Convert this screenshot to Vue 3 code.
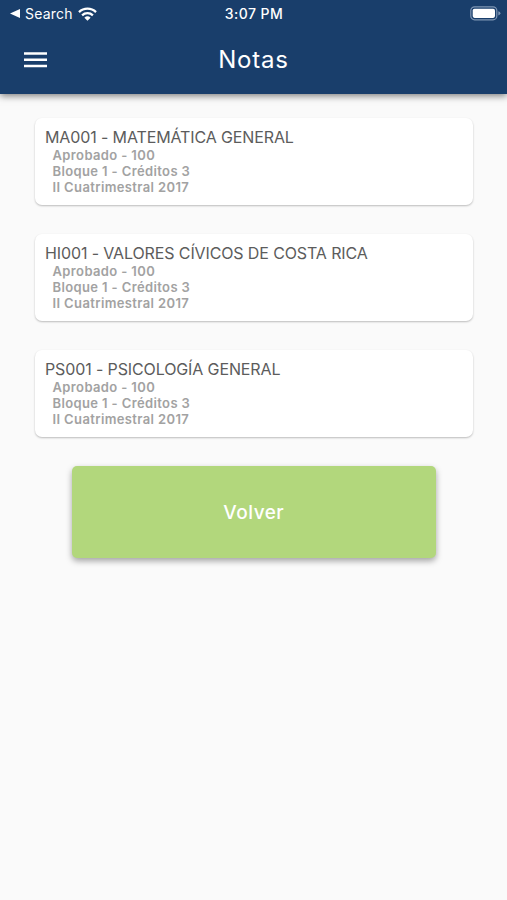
<script setup>
import { ref } from 'vue';

const notas = ref([
  { codigo: 'MA001', nombre: 'MATEMÁTICA GENERAL', estado: 'Aprobado', nota: 100, bloque: 1, creditos: 3, periodo: 'II Cuatrimestral 2017' },
  { codigo: 'HI001', nombre: 'VALORES CÍVICOS DE COSTA RICA', estado: 'Aprobado', nota: 100, bloque: 1, creditos: 3, periodo: 'II Cuatrimestral 2017' },
  { codigo: 'PS001', nombre: 'PSICOLOGÍA GENERAL', estado: 'Aprobado', nota: 100, bloque: 1, creditos: 3, periodo: 'II Cuatrimestral 2017' }
]);
</script>

<template>
  <div class="app">
    <header class="header">
      <div class="status-bar">
        <div class="status-left">
          <svg class="back-arrow" width="10" height="9" viewBox="0 0 10 9">
            <path d="M0 4.5L10 0V9Z" fill="#fff" />
          </svg>
          <span class="search">Search</span>
          <svg class="wifi" width="19" height="14" viewBox="0 0 19 14">
            <g fill="none" stroke="#fff" stroke-width="2.3">
              <path d="M1 5.1A12.2 12.2 0 0 1 18 5.1" />
              <path d="M4.1 8.3A7.8 7.8 0 0 1 14.9 8.3" />
            </g>
            <path d="M6.4 10.7A4.5 4.5 0 0 1 12.6 10.7L9.5 13.8Z" fill="#fff" />
          </svg>
        </div>
        <span class="time">3:07 PM</span>
        <div class="status-right">
          <svg width="31" height="15" viewBox="0 0 31 15">
            <rect x="0.8" y="0.8" width="26" height="13" rx="3.8" fill="none" stroke="#7f96b4" stroke-width="1.2" />
            <rect x="2.7" y="2.7" width="22.3" height="9.2" rx="1.8" fill="#fff" />
            <path d="M28.3 5.2Q30.4 5.8 30.4 7.3T28.3 9.4Z" fill="#7f96b4" />
          </svg>
        </div>
      </div>
      <div class="toolbar">
        <button class="menu-button" aria-label="Menú">
          <svg width="23" height="16" viewBox="0 0 23 16">
            <path d="M0 1.5H23M0 7.8H23M0 14H23" stroke="#fff" stroke-width="2.5" />
          </svg>
        </button>
        <h1>Notas</h1>
        <span></span>
      </div>
    </header>

    <main class="content">
      <div v-for="item in notas" :key="item.codigo" class="card">
        <h2>{{ item.codigo }} - {{ item.nombre }}</h2>
        <p>{{ item.estado }} - {{ item.nota }}</p>
        <p>Bloque {{ item.bloque }} - Créditos {{ item.creditos }}</p>
        <p>{{ item.periodo }}</p>
      </div>
      <button class="volver">Volver</button>
    </main>
  </div>
</template>

<style>
body {
  background-color: #fafafa;
}
</style>

<style scoped>
.app {
  min-height: 100vh;
  background-color: #fafafa;
  font-family: Inter, "Liberation Sans", sans-serif;
}

.header {
  height: 93.5px;
  background-color: #193e6b;
  color: white;
  box-shadow: 0 2px 7px rgba(0, 0, 0, 0.5);
}

.status-bar {
  display: grid;
  grid-template-columns: 1fr auto 1fr;
  align-items: center;
  height: 27px;
  padding: 0 6px 0 10px;
}

.status-left {
  display: flex;
  align-items: center;
}

.search {
  margin: 0 5px;
  font-size: 14px;
  line-height: 27px;
  letter-spacing: 0.2px;
}

.time {
  margin-right: 3px;
  font-size: 14px;
  font-weight: 500;
  letter-spacing: 0.45px;
}

.status-right {
  display: flex;
  justify-content: flex-end;
}

.toolbar {
  display: grid;
  grid-template-columns: 1fr auto 1fr;
  align-items: center;
  height: 65px;
  padding: 0 24px;
}

.menu-button {
  display: flex;
  padding: 0;
  border: none;
  background: none;
  cursor: pointer;
}

h1 {
  margin: 0;
  font-size: 24px;
  font-weight: 400;
  letter-spacing: 0.8px;
}

.content {
  display: flex;
  flex-direction: column;
  gap: 29px;
  padding: 24.5px 34px 0 35px;
}

.card {
  height: 87px;
  padding: 10px;
  box-sizing: border-box;
  background-color: #fff;
  border-radius: 7px;
  box-shadow: 0 1px 2px rgba(0, 0, 0, 0.25);
}

.card h2 {
  margin: 0;
  font-size: 16px;
  font-weight: 400;
  line-height: 19px;
  letter-spacing: -0.12px;
  color: #5c5c5c;
}

.card p {
  margin: 0 0 0 7.5px;
  font-size: 13px;
  font-weight: 600;
  line-height: 16px;
  letter-spacing: 0.38px;
  color: #a2a2a2;
}

.volver {
  height: 92px;
  margin: 0 37px 0 36.5px;
  border: none;
  border-radius: 5px;
  background-color: #b2d77c;
  box-shadow: 0 3px 6px rgba(0, 0, 0, 0.35);
  color: white;
  font-family: inherit;
  font-size: 19px;
  font-weight: 500;
  letter-spacing: 0.5px;
  cursor: pointer;
}
</style>
